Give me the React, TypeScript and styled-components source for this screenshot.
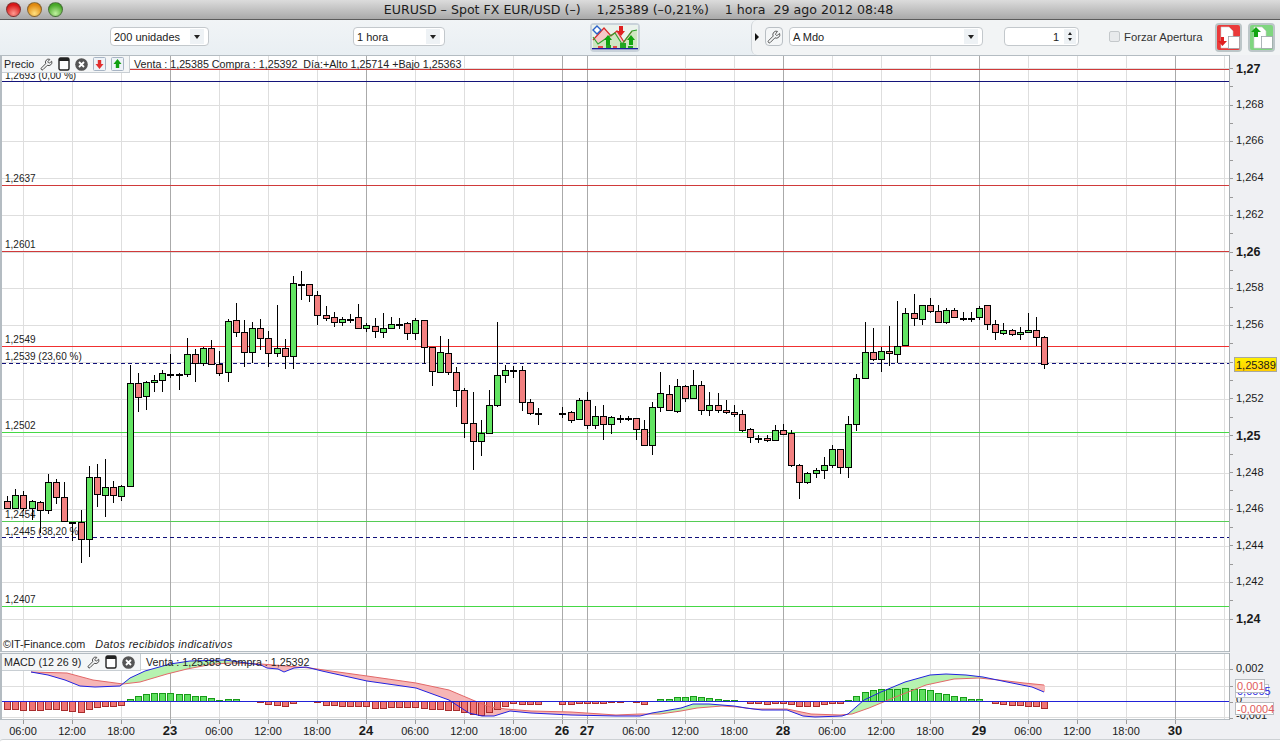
import styled, { createGlobalStyle } from 'styled-components';
import { Wrench } from 'lucide-react';

const GlobalStyle = createGlobalStyle`
  html, body {
    margin: 0;
    padding: 0;
    background: #fff;
    font-family: "Liberation Sans", Arial, sans-serif;
  }
`;

type Kind = 'g' | 'r' | 'd';
// x, body top, body bottom, wick top, wick bottom, kind (page pixels)
type Candle = [number, number, number, number, number, Kind];

const CANDLES: Candle[] = [
  [7, 501, 508, 496, 508, 'r'], [15, 495, 508, 489, 508, 'g'], [23, 495, 508, 491, 511, 'r'],
  [32, 501, 508, 500, 520, 'g'], [40, 502, 510, 501, 533, 'r'], [48, 482, 510, 474, 514, 'g'],
  [56, 482, 497, 479, 504, 'r'], [64, 497, 521, 482, 521, 'r'], [72, 522, 522, 522, 541, 'd'],
  [81, 522, 539, 510, 563, 'r'], [89, 477, 539, 466, 557, 'g'], [97, 477, 494, 464, 507, 'r'],
  [105, 487, 495, 459, 517, 'g'], [113, 487, 495, 481, 503, 'r'], [121, 486, 496, 485, 501, 'g'],
  [130, 383, 486, 365, 486, 'g'], [138, 383, 397, 373, 412, 'r'], [146, 382, 396, 381, 410, 'g'],
  [154, 380, 382, 375, 392, 'g'], [162, 373, 380, 370, 392, 'g'], [170, 374, 374, 354, 378, 'd'],
  [179, 374, 374, 373, 390, 'd'], [187, 354, 374, 338, 377, 'g'], [195, 354, 363, 349, 382, 'r'],
  [203, 348, 363, 347, 366, 'g'], [211, 348, 364, 340, 365, 'r'], [219, 364, 373, 351, 376, 'r'],
  [228, 321, 372, 319, 382, 'g'], [236, 320, 332, 303, 337, 'r'], [244, 332, 352, 320, 367, 'r'],
  [252, 328, 352, 322, 363, 'g'], [260, 328, 338, 319, 350, 'r'], [268, 338, 353, 331, 367, 'r'],
  [277, 348, 353, 305, 357, 'g'], [285, 348, 356, 339, 369, 'r'], [293, 283, 356, 276, 369, 'g'],
  [301, 284, 284, 271, 300, 'd'], [309, 284, 295, 284, 302, 'r'], [317, 295, 315, 291, 325, 'r'],
  [326, 315, 318, 306, 321, 'r'], [334, 317, 322, 312, 327, 'r'], [342, 319, 322, 317, 326, 'g'],
  [350, 319, 319, 314, 323, 'd'], [358, 317, 328, 304, 329, 'r'], [366, 325, 328, 323, 332, 'g'],
  [375, 326, 331, 318, 338, 'r'], [383, 328, 332, 313, 338, 'g'], [391, 324, 328, 317, 328, 'g'],
  [399, 324, 324, 318, 329, 'd'], [407, 323, 333, 322, 340, 'r'], [415, 320, 333, 318, 340, 'g'],
  [424, 320, 347, 320, 364, 'r'], [432, 347, 371, 347, 386, 'r'], [440, 352, 372, 336, 372, 'g'],
  [448, 353, 372, 339, 375, 'r'], [456, 372, 390, 367, 407, 'r'], [464, 390, 423, 388, 438, 'r'],
  [473, 423, 441, 392, 470, 'r'], [481, 433, 441, 420, 456, 'g'], [489, 405, 433, 390, 434, 'g'],
  [497, 375, 405, 322, 407, 'g'], [505, 370, 375, 365, 383, 'g'], [513, 370, 370, 366, 378, 'd'],
  [522, 370, 402, 366, 411, 'r'], [530, 402, 413, 399, 415, 'r'], [538, 413, 413, 408, 425, 'd'],
  [562, 413, 413, 407, 418, 'd'], [571, 412, 420, 411, 423, 'r'], [579, 400, 419, 398, 419, 'g'],
  [587, 400, 425, 392, 429, 'r'], [595, 416, 425, 406, 429, 'g'], [603, 416, 424, 405, 440, 'r'],
  [611, 417, 424, 416, 434, 'g'], [620, 418, 418, 415, 423, 'd'], [628, 418, 418, 416, 421, 'd'],
  [636, 418, 429, 418, 440, 'r'], [644, 429, 445, 420, 446, 'r'], [652, 407, 445, 402, 455, 'g'],
  [660, 393, 407, 372, 412, 'g'], [669, 394, 410, 385, 411, 'r'], [677, 386, 411, 379, 413, 'g'],
  [685, 386, 398, 385, 402, 'r'], [693, 385, 398, 370, 398, 'g'], [701, 385, 410, 381, 415, 'r'],
  [709, 405, 410, 392, 416, 'g'], [718, 405, 410, 393, 413, 'r'], [726, 410, 412, 400, 414, 'r'],
  [734, 412, 414, 405, 417, 'r'], [742, 414, 430, 410, 432, 'r'], [750, 429, 437, 428, 443, 'r'],
  [758, 438, 438, 435, 443, 'd'], [767, 438, 440, 435, 442, 'r'], [775, 430, 440, 425, 440, 'g'],
  [783, 430, 434, 424, 434, 'r'], [791, 433, 465, 430, 467, 'r'], [799, 465, 482, 464, 499, 'r'],
  [807, 473, 482, 472, 484, 'g'], [816, 470, 473, 468, 478, 'g'], [824, 465, 470, 457, 479, 'g'],
  [832, 449, 465, 445, 468, 'g'], [840, 449, 467, 449, 474, 'r'], [848, 424, 467, 416, 478, 'g'],
  [856, 378, 424, 374, 431, 'g'], [865, 352, 378, 322, 378, 'g'], [873, 352, 359, 328, 361, 'r'],
  [881, 351, 359, 347, 372, 'g'], [889, 351, 353, 326, 366, 'r'], [897, 346, 354, 301, 363, 'g'],
  [905, 313, 345, 308, 345, 'g'], [914, 313, 318, 294, 326, 'r'], [922, 305, 319, 305, 325, 'g'],
  [930, 305, 311, 298, 313, 'r'], [938, 311, 322, 305, 322, 'r'], [946, 310, 322, 308, 324, 'g'],
  [954, 310, 317, 308, 318, 'r'], [963, 318, 318, 312, 321, 'd'], [971, 318, 318, 312, 322, 'd'],
  [979, 308, 317, 306, 320, 'g'], [987, 305, 324, 305, 330, 'r'], [995, 324, 332, 320, 340, 'r'],
  [1003, 330, 333, 323, 335, 'g'], [1012, 330, 334, 329, 336, 'r'], [1020, 332, 334, 327, 340, 'g'],
  [1028, 330, 332, 313, 332, 'g'], [1036, 330, 337, 317, 346, 'r'], [1044, 337, 364, 336, 369, 'r'],
];

// x, height above (+) or below (-) the zero line
const HISTOGRAM: [number, number][] = [
  [7, -8], [15, -8], [23, -9], [32, -9], [40, -9], [48, -8], [56, -8], [64, -9], [72, -10], [81, -11],
  [89, -8], [97, -6], [105, -5], [113, -5], [121, -4], [130, 2], [138, 5], [146, 7], [154, 8], [162, 8],
  [170, 8], [179, 7], [187, 7], [195, 5], [203, 5], [211, 3], [219, 1], [228, 2], [236, 2],
  [260, -1], [268, -3], [277, -4], [285, -5], [293, -2], [317, -1], [326, -4], [334, -4], [342, -5],
  [350, -5], [358, -5], [366, -5], [375, -7], [383, -7], [391, -6], [399, -6], [407, -6], [415, -6],
  [424, -7], [432, -8], [440, -8], [448, -9], [456, -9], [464, -11], [473, -13], [481, -14], [489, -11],
  [497, -8], [505, -5], [513, -2], [522, -3], [530, -3], [538, -3], [562, -3], [571, -3], [579, -2],
  [587, -2], [595, -2], [603, -2], [611, -1], [620, -1], [636, -1], [644, -3], [660, 2], [669, 2],
  [677, 4], [685, 4], [693, 5], [701, 4], [709, 3], [718, 2], [726, 1], [734, 1], [750, -2], [758, -2],
  [767, -3], [775, -2], [783, -2], [791, -3], [799, -5], [807, -5], [816, -5], [824, -3], [832, -2],
  [840, -2], [848, 1], [856, 5], [865, 9], [873, 11], [881, 12], [889, 12], [897, 12], [905, 13],
  [914, 12], [922, 12], [930, 11], [938, 8], [946, 7], [954, 5], [963, 4], [971, 2], [979, 2],
  [995, -2], [1003, -3], [1012, -4], [1020, -4], [1028, -5], [1036, -5], [1044, -7],
];

type Pt = [number, number];

const MACD_LINE: Pt[] = [
  [31, 672], [48, 675], [65, 680], [80, 686], [95, 687], [120, 686], [130, 678], [145, 671], [170, 664],
  [190, 661], [225, 660], [261, 665], [267, 668], [278, 669], [284, 672], [294, 668], [306, 667],
  [322, 671], [367, 681], [416, 688], [449, 700], [469, 713], [482, 716], [494, 716], [510, 711],
  [531, 713], [571, 715], [616, 716], [640, 716], [652, 713], [664, 711], [681, 708], [693, 704],
  [709, 704], [734, 706], [746, 708], [762, 710], [787, 710], [803, 716], [815, 717], [842, 716],
  [848, 714], [864, 700], [881, 692], [905, 682], [930, 675], [946, 674], [966, 675], [983, 677],
  [1007, 682], [1032, 687], [1044, 692],
];

const SIGNAL_LINE: Pt[] = [
  [31, 672], [67, 673], [93, 680], [123, 684], [140, 682], [167, 674], [187, 669], [213, 664], [233, 663],
  [261, 664], [286, 666], [310, 668], [331, 671], [367, 676], [416, 683], [449, 690], [475, 701],
  [490, 707], [506, 709], [531, 711], [571, 712], [616, 715], [640, 714], [660, 714], [681, 711],
  [697, 708], [722, 706], [738, 707], [754, 709], [787, 709], [811, 714], [840, 715], [852, 714],
  [869, 708], [893, 698], [926, 685], [954, 679], [979, 678], [999, 680], [1024, 683], [1044, 685],
];

const DAY_LINES = [170, 366, 562, 587, 783, 979, 1175];
const HOUR_LINES = [23, 72, 121, 219, 268, 317, 415, 464, 513, 636, 685, 734, 832, 881, 930, 1028, 1077, 1126, 1224];

const TIME_LABELS: [number, string][] = [
  [23, '06:00'], [72, '12:00'], [121, '18:00'], [170, '23'], [219, '06:00'], [268, '12:00'], [317, '18:00'],
  [366, '24'], [415, '06:00'], [464, '12:00'], [513, '18:00'], [562, '26'], [587, '27'], [636, '06:00'],
  [685, '12:00'], [734, '18:00'], [783, '28'], [832, '06:00'], [881, '12:00'], [930, '18:00'], [979, '29'],
  [1028, '06:00'], [1077, '12:00'], [1126, '18:00'], [1175, '30'],
];

const PRICE_LABELS: [number, string, boolean][] = [
  [68, '1,27', true], [104.7, '1,268', false], [141.4, '1,266', false], [178, '1,264', false],
  [215, '1,262', false], [251.5, '1,26', true], [288, '1,258', false], [325, '1,256', false],
  [398.6, '1,252', false], [435.5, '1,25', true], [472.5, '1,248', false], [508.8, '1,246', false],
  [545.5, '1,244', false], [582, '1,242', false], [618.8, '1,24', true],
];

const LEVELS: { y: number; color: string; dashed?: boolean }[] = [
  { y: 69, color: '#d03a3a' },
  { y: 81, color: '#14147a' },
  { y: 185, color: '#d03a3a' },
  { y: 251, color: '#d03a3a' },
  { y: 346, color: '#f03030' },
  { y: 363, color: '#10107a', dashed: true },
  { y: 432, color: '#45d845' },
  { y: 521, color: '#55cc55' },
  { y: 537, color: '#10107a', dashed: true },
  { y: 606, color: '#45d845' },
];

const LEVEL_LABELS: [number, string][] = [
  [75, '1,2693 (0,00 %)'], [178, '1,2637'], [244, '1,2601'], [339, '1,2549'], [356, '1,2539 (23,60 %)'],
  [425, '1,2502'], [514, '1,2454'], [531, '1,2445 (38,20 %)'], [599, '1,2407'],
];

const Page = styled.div`
  width: 1280px;
  height: 744px;
  display: flex;
  flex-direction: column;
  overflow: hidden;
  background: #eff1f3;
`;

const TitleBar = styled.div`
  height: 19px;
  flex: none;
  position: relative;
  display: flex;
  align-items: center;
  justify-content: center;
  background: linear-gradient(#dcdcdc, #a9a9a9);
  border-bottom: 1px solid #5b5b5b;
`;

const TrafficLights = styled.div`
  position: absolute;
  left: 6px;
  top: 2px;
  display: flex;
  gap: 6px;
`;

const Light = styled.span<{ $color: string; $glow: string }>`
  width: 15px;
  height: 15px;
  border-radius: 50%;
  box-sizing: border-box;
  border: 1px solid rgba(60, 60, 60, 0.55);
  background: radial-gradient(circle at 50% 80%, ${(p) => p.$glow}, ${(p) => p.$color} 70%);
`;

const TitleText = styled.div`
  margin-left: -3px;
  font-family: "DejaVu Sans", sans-serif;
  font-size: 12.6px;
  color: #1c1c1c;
  white-space: pre;
`;

const Toolbar = styled.div`
  height: 35px;
  flex: none;
  display: flex;
  align-items: center;
  padding-left: 110px;
  background: linear-gradient(#f1f4f6, #e9eff3);
  box-sizing: border-box;
`;

const SelectBox = styled.div<{ $w: number; $ml?: number }>`
  width: ${(p) => p.$w}px;
  height: 19px;
  margin-left: ${(p) => p.$ml ?? 0}px;
  margin-bottom: 2px;
  box-sizing: border-box;
  flex: none;
  display: flex;
  align-items: center;
  justify-content: space-between;
  padding: 0 4px 0 3px;
  background: #fff;
  border: 1px solid #c3c8cc;
  border-radius: 4px;
  font-size: 11px;
  color: #222;
`;

const Caret = styled.span`
  width: 14px;
  height: 15px;
  background: #eef2f5;
  display: flex;
  align-items: center;
  justify-content: center;
  &::after {
    content: '';
    border-left: 3px solid transparent;
    border-right: 3px solid transparent;
    border-top: 4px solid #222;
  }
`;

const IndicatorButton = styled.div`
  margin-left: 145px;
  flex: none;
  width: 50px;
  height: 29px;
  box-sizing: border-box;
  border: 2px solid #c9d2da;
  border-radius: 4px;
  background: #fff;
  display: flex;
`;

const RightGroup = styled.div`
  margin-left: 111px;
  flex: 1;
  height: 100%;
  display: flex;
  align-items: center;
  background: #f2f4f5;
  border-left: 1px solid #cfd4d8;
  border-top-left-radius: 6px;
  border-bottom-left-radius: 6px;
  padding-left: 3px;
`;

const Triangle = styled.span`
  flex: none;
  margin-bottom: 2px;
  border-top: 4px solid transparent;
  border-bottom: 4px solid transparent;
  border-left: 4px solid #111;
`;

const WrenchButton = styled.div`
  flex: none;
  margin-left: 6px;
  margin-bottom: 2px;
  width: 18px;
  height: 19px;
  box-sizing: border-box;
  border: 1px solid #b9bfc4;
  border-radius: 4px;
  background: #f4f6f7;
  display: flex;
  align-items: center;
  justify-content: center;
  color: #333;
`;

const Spinner = styled(SelectBox)`
  justify-content: flex-end;
  gap: 5px;
  padding-right: 2px;
`;

const SpinArrows = styled.span`
  width: 12px;
  height: 15px;
  background: #eef2f5;
  display: flex;
  flex-direction: column;
  align-items: center;
  justify-content: center;
  gap: 3px;
  &::before {
    content: '';
    border-left: 2px solid transparent;
    border-right: 2px solid transparent;
    border-bottom: 3px solid #222;
  }
  &::after {
    content: '';
    border-left: 2px solid transparent;
    border-right: 2px solid transparent;
    border-top: 3px solid #222;
  }
`;

const CheckBox = styled.span`
  flex: none;
  margin-left: 30px;
  margin-bottom: 2px;
  width: 11px;
  height: 11px;
  box-sizing: border-box;
  border: 1px solid #c4c8cb;
  border-radius: 2px;
  background: #e8eaec;
`;

const CheckLabel = styled.span`
  margin-left: 4px;
  margin-bottom: 2px;
  flex: none;
  width: 80px;
  font-size: 11.3px;
  color: #333;
  white-space: nowrap;
`;

const OrderButton = styled.div<{ $ml: number }>`
  flex: none;
  margin-left: ${(p) => p.$ml}px;
  width: 27px;
  height: 29px;
  display: flex;
`;

const ChartRow = styled.div<{ $h: number; $mt?: number }>`
  height: ${(p) => p.$h}px;
  margin-top: ${(p) => p.$mt ?? 0}px;
  flex: none;
  display: flex;
`;

const Plot = styled.div`
  width: 1229px;
  flex: none;
  position: relative;
  box-sizing: border-box;
  background: #fff;
  border: 1px solid #b4bcc2;
  border-right: none;
  border-left-width: 2px;
`;

const Axis = styled.div`
  flex: 1;
  border-left: 1px solid #a9aeb2;
  background: #eff0f3;
`;

const Chart = styled.svg`
  display: block;
  width: 100%;
  height: 100%;
`;

const LegendBox = styled.div<{ $w: number }>`
  position: absolute;
  left: 0;
  top: 0;
  width: ${(p) => p.$w}px;
  height: 17px;
  box-sizing: border-box;
  display: flex;
  align-items: center;
  gap: 5px;
  padding: 0 2px;
  background: #f4f6f7;
  border-right: 1px solid #c8ced3;
  border-bottom: 1px solid #c8ced3;
  font-size: 10.7px;
  color: #222;
  white-space: nowrap;
`;

const LegendName = styled.span`
  margin-right: 1px;
`;

const LegendQuote = styled.div<{ $left: number }>`
  position: absolute;
  left: ${(p) => p.$left}px;
  top: 2px;
  font-size: 10.7px;
  color: #222;
  white-space: pre;
`;

const Credit = styled.div`
  position: absolute;
  left: 1px;
  bottom: 1px;
  font-size: 10.8px;
  color: #222;
  display: flex;
  gap: 10px;
  white-space: nowrap;
`;

const CreditNote = styled.span`
  font-style: italic;
  letter-spacing: 0.35px;
`;

const TimeAxis = styled.div`
  height: 19px;
  flex: none;
  background: #eff0f3;
`;

const BottomEdge = styled.div`
  flex: 1;
  background: #fff;
  border-top: 1px solid #cdd1d4;
  border-top-left-radius: 3px;
`;

const LevelLabel = styled.text`
  font-size: 10px;
  fill: #222;
`;

const PriceLabel = styled.text<{ $bold?: boolean }>`
  font-size: ${(p) => (p.$bold ? 12.5 : 11)}px;
  font-weight: ${(p) => (p.$bold ? 700 : 400)};
  fill: #1a1a1a;
`;

const TimeLabel = styled.text<{ $bold?: boolean }>`
  font-size: ${(p) => (p.$bold ? 13 : 11)}px;
  font-weight: ${(p) => (p.$bold ? 700 : 400)};
  fill: #1a1a1a;
  text-anchor: middle;
`;

const BoxedValue = styled.text<{ $color: string }>`
  font-size: 11px;
  fill: ${(p) => p.$color};
`;

function valueAt(points: Pt[], x: number) {
  for (let i = 1; i < points.length; i++) {
    const [x0, y0] = points[i - 1];
    const [x1, y1] = points[i];
    if (x <= x1) return y0 + ((y1 - y0) * (x - x0)) / (x1 - x0);
  }
  return points[points.length - 1][1];
}

function toPolyline(points: Pt[]) {
  return points.map((p) => p.join(',')).join(' ');
}

function Grid({ from, to, rows }: { from: number; to: number; rows: number[] }) {
  return (
    <g shapeRendering="crispEdges">
      {rows.map((y) => (
        <line key={y} x1={2} x2={1229} y1={Math.round(y) + 0.5} y2={Math.round(y) + 0.5} stroke="#dedede" />
      ))}
      {HOUR_LINES.map((x) => (
        <line key={x} x1={x + 0.5} x2={x + 0.5} y1={from} y2={to} stroke="#dedede" />
      ))}
      {DAY_LINES.map((x) => (
        <line key={x} x1={x + 0.5} x2={x + 0.5} y1={from} y2={to} stroke="#aaaaaa" />
      ))}
    </g>
  );
}

function Candles() {
  return (
    <g shapeRendering="crispEdges">
      {CANDLES.map(([x, top, bottom, hi, lo, kind]) => (
        <g key={x}>
          <line x1={x + 0.5} x2={x + 0.5} y1={hi} y2={lo} stroke="#000" />
          {kind === 'd' ? (
            <rect x={x - 3} y={top} width={7} height={2} fill="#000" />
          ) : (
            <rect
              x={x - 2.5}
              y={top + 0.5}
              width={6}
              height={bottom - top}
              fill={kind === 'g' ? '#62e462' : '#f28080'}
              stroke="#000"
            />
          )}
        </g>
      ))}
    </g>
  );
}

function MacdBands() {
  const quads = [];
  for (let x = 31; x < 1044; x += 2) {
    const b0 = valueAt(MACD_LINE, x);
    const b1 = valueAt(MACD_LINE, x + 2);
    const s0 = valueAt(SIGNAL_LINE, x);
    const s1 = valueAt(SIGNAL_LINE, x + 2);
    quads.push(
      <polygon
        key={x}
        points={`${x},${b0} ${x + 2},${b1} ${x + 2},${s1} ${x},${s0}`}
        fill={b0 + b1 < s0 + s1 ? '#b6f2b0' : '#f6b6b6'}
      />,
    );
  }
  return <g>{quads}</g>;
}

function WindowIcon() {
  return (
    <svg width="12" height="14" viewBox="0 0 12 14">
      <rect x="1" y="1" width="10" height="12" rx="1.5" fill="#fff" stroke="#222" strokeWidth="1.4" />
      <rect x="1" y="1" width="10" height="3" fill="#222" />
    </svg>
  );
}

function CloseIcon() {
  return (
    <svg width="13" height="13" viewBox="0 0 13 13">
      <circle cx="6.5" cy="6.5" r="6.3" fill="#555" />
      <path d="M4 4l5 5M9 4l-5 5" stroke="#fff" strokeWidth="1.8" />
    </svg>
  );
}

function ArrowDoc({ up }: { up?: boolean }) {
  return (
    <svg width="13" height="14" viewBox="0 0 13 14">
      <rect x="0.5" y="0.5" width="12" height="13" rx="1" fill="#eef3f8" stroke="#a7b4c4" />
      {up ? (
        <path d="M6.5 2L10.5 7H8.2V11H4.8V7H2.5z" fill="#12a012" />
      ) : (
        <path d="M6.5 12L2.5 7H4.8V3H8.2V7H10.5z" fill="#e23030" />
      )}
    </svg>
  );
}

function IndicatorIcon() {
  return (
    <svg width="46" height="25" viewBox="0 0 46 25">
      <rect width="46" height="25" fill="#eaf2ec" />
      <path d="M1 15L12 3l7 8 6-5 7 11 8-11 5-1v18H1z" fill="#f6c8c8" />
      <path d="M1 12l5 7 10-7 7-4 7 11 10-13 5-1v19H1z" fill="#c5eec0" opacity="0.8" />
      <polyline points="1,15 12,3 19,11 25,6 32,17 40,6" fill="none" stroke="#d82a2a" strokeWidth="1.2" />
      <polyline points="1,12 6,19 16,12 23,8 30,19 40,6 45,5" fill="none" stroke="#2fa52f" strokeWidth="1.2" />
      <path d="M5 1l4 4-4 4-4-4z" fill="#fff" stroke="#2b62c8" strokeWidth="1.4" />
      <path d="M27 1h4v5h2l-4 5-4-5h2z" fill="#e02020" />
      <path d="M16 10l4 5h-2v5h-4v-5h-2z" fill="#10a510" />
      <path d="M39 10l4 5h-2v5h-4v-5h-2z" fill="#10a510" />
      <g fill="#23a523">
        <rect x="6" y="21" width="5" height="2" fill="#e24a4a" />
        <rect x="14" y="20" width="5" height="3" />
        <rect x="21" y="21" width="4" height="2" fill="#e24a4a" />
        <rect x="28" y="18" width="6" height="5" />
        <rect x="36" y="21" width="5" height="2" />
      </g>
      <rect y="23" width="46" height="1.4" fill="#1c1c9c" />
    </svg>
  );
}

function OrderIcon({ up }: { up?: boolean }) {
  const tone = up ? '#7fd67f' : '#ea3a3a';
  return (
    <svg width="27" height="29" viewBox="0 0 27 29">
      <rect x="1" y="1" width="25" height="27" rx="3" fill={tone} stroke="#bcc6c8" strokeWidth="2" />
      <path d="M6 4h8l4 4v17H6z" fill="#fff" stroke="#ccc" strokeWidth="0.6" />
      <rect x="13.5" y="13.5" width="11" height="12" fill="#fff" stroke="#9aa3a8" strokeWidth="0.8" />
      {up ? (
        <path d="M8 4l5 5h-3v5H6V9H3z" fill="#10a510" />
      ) : (
        <path d="M7.5 23l-4.5-5h3v-4h3v4h3z" fill="#e02020" />
      )}
    </svg>
  );
}

function PricePanel() {
  const rows = [68, 104.7, 141.4, 178, 215, 251.5, 288, 325, 362, 398.6, 436, 473, 509, 546, 582, 619];
  return (
    <ChartRow $h={597}>
      <Plot>
        <Chart viewBox="2 56 1227 595" preserveAspectRatio="none">
          <Grid from={56} to={651} rows={rows} />
          <g shapeRendering="crispEdges">
            {LEVELS.map((l) => (
              <line
                key={l.y}
                x1={2}
                x2={1229}
                y1={l.y + 0.5}
                y2={l.y + 0.5}
                stroke={l.color}
                strokeDasharray={l.dashed ? '4 3' : undefined}
              />
            ))}
          </g>
          {LEVEL_LABELS.map(([y, text]) => (
            <LevelLabel key={y} x={5} y={y + 3.5}>
              {text}
            </LevelLabel>
          ))}
          <Candles />
        </Chart>
        <LegendBox $w={128}>
          <LegendName>Precio</LegendName>
          <Wrench size={13} strokeWidth={1.5} />
          <WindowIcon />
          <CloseIcon />
          <ArrowDoc />
          <ArrowDoc up />
        </LegendBox>
        <LegendQuote $left={132}>Venta : 1,25385 Compra : 1,25392  Día:+Alto 1,25714 +Bajo 1,25363</LegendQuote>
        <Credit>
          <span>©IT-Finance.com</span>
          <CreditNote>Datos recibidos indicativos</CreditNote>
        </Credit>
      </Plot>
      <Axis>
        <Chart viewBox="1230 55 50 597">
          <g shapeRendering="crispEdges">
            {Array.from({ length: 31 }, (_, i) => 68 + i * 18.36).map((y) => (
              <line key={y} x1={1229} x2={1233} y1={Math.round(y) + 0.5} y2={Math.round(y) + 0.5} stroke="#9a9a9a" />
            ))}
          </g>
          {PRICE_LABELS.map(([y, text, bold]) => (
            <PriceLabel key={text} x={1236} y={y + (bold ? 4.5 : 3)} $bold={bold}>
              {text}
            </PriceLabel>
          ))}
          <defs>
            <linearGradient id="priceTag" x1="0" y1="0" x2="0" y2="1">
              <stop offset="0" stopColor="#fff200" />
              <stop offset="1" stopColor="#ffcb00" />
            </linearGradient>
          </defs>
          <rect x={1234.5} y={357.5} width={42} height={14} fill="url(#priceTag)" stroke="#a8a8a0" />
          <PriceLabel x={1236} y={368.5}>
            1,25389
          </PriceLabel>
        </Chart>
      </Axis>
    </ChartRow>
  );
}

function MacdPanel() {
  return (
    <ChartRow $h={67} $mt={1}>
      <Plot>
        <Chart viewBox="2 654 1227 65" preserveAspectRatio="none">
          <Grid from={654} to={719} rows={[669, 686, 717]} />
          <MacdBands />
          <g shapeRendering="crispEdges">
            {HISTOGRAM.map(([x, h]) => (
              <rect
                key={x}
                x={x - 2.5}
                y={h > 0 ? 701.5 - h : 701.5}
                width={6}
                height={Math.abs(h)}
                fill={h > 0 ? '#5fe05f' : '#ef7474'}
                stroke={h > 0 ? '#189a18' : '#a82c2c'}
              />
            ))}
          </g>
          <polyline points={toPolyline(SIGNAL_LINE)} fill="none" stroke="#e26868" />
          <polyline points={toPolyline(MACD_LINE)} fill="none" stroke="#2222e0" />
          <line x1={2} x2={1229} y1={701.5} y2={701.5} stroke="#2222d8" shapeRendering="crispEdges" />
        </Chart>
        <LegendBox $w={139}>
          <LegendName>MACD (12 26 9)</LegendName>
          <Wrench size={13} strokeWidth={1.5} />
          <WindowIcon />
          <CloseIcon />
        </LegendBox>
        <LegendQuote $left={144}>Venta : 1,25385 Compra : 1,25392</LegendQuote>
      </Plot>
      <Axis>
        <Chart viewBox="1230 653 50 67">
          <g shapeRendering="crispEdges">
            {[669, 686, 702, 718].map((y) => (
              <line key={y} x1={1229} x2={1233} y1={y + 0.5} y2={y + 0.5} stroke="#9a9a9a" />
            ))}
          </g>
          <BoxedValue $color="#1a1a1a" x={1236} y={672}>
            0,002
          </BoxedValue>
          <BoxedValue $color="#1a1a1a" x={1236} y={719}>
            -0,001
          </BoxedValue>
          <BoxedValue $color="#1a1a1a" x={1236} y={703}>
            0
          </BoxedValue>
          <rect x={1235.5} y={684.5} width={33} height={13} fill="#fff" stroke="#c0c4c8" />
          <BoxedValue $color="#2a2ae0" x={1237} y={695}>
            0,0005
          </BoxedValue>
          <rect x={1235.5} y={679.5} width={29} height={13} fill="#fff" stroke="#b8bcc0" />
          <BoxedValue $color="#e05a5a" x={1237} y={690}>
            0,001
          </BoxedValue>
          <rect x={1235.5} y={702.5} width={38} height={12} fill="#fff" stroke="#b8bcc0" />
          <BoxedValue $color="#e05a5a" x={1237} y={712.5}>
            -0,0004
          </BoxedValue>
        </Chart>
      </Axis>
    </ChartRow>
  );
}

export default function App() {
  return (
    <Page>
      <GlobalStyle />
      <TitleBar>
        <TrafficLights>
          <Light $color="#d81818" $glow="#ff9a90" />
          <Light $color="#e08a10" $glow="#ffe080" />
          <Light $color="#48a828" $glow="#c0f0a0" />
        </TrafficLights>
        <TitleText>EURUSD – Spot FX EUR/USD (–)    1,25389 (–0,21%)    1 hora  29 ago 2012 08:48</TitleText>
      </TitleBar>
      <Toolbar>
        <SelectBox $w={99}>
          200 unidades
          <Caret />
        </SelectBox>
        <SelectBox $w={92} $ml={144}>
          1 hora
          <Caret />
        </SelectBox>
        <IndicatorButton>
          <IndicatorIcon />
        </IndicatorButton>
        <RightGroup>
          <Triangle />
          <WrenchButton>
            <Wrench size={14} strokeWidth={1.4} />
          </WrenchButton>
          <SelectBox $w={194} $ml={6}>
            A Mdo
            <Caret />
          </SelectBox>
          <Spinner $w={75} $ml={21}>
            1
            <SpinArrows />
          </Spinner>
          <CheckBox />
          <CheckLabel>Forzar Apertura</CheckLabel>
          <OrderButton $ml={11}>
            <OrderIcon />
          </OrderButton>
          <OrderButton $ml={6}>
            <OrderIcon up />
          </OrderButton>
        </RightGroup>
      </Toolbar>
      <PricePanel />
      <MacdPanel />
      <TimeAxis>
        <Chart viewBox="0 720 1280 19">
          <g shapeRendering="crispEdges">
            {TIME_LABELS.map(([x]) => (
              <line key={x} x1={x + 0.5} x2={x + 0.5} y1={720} y2={724} stroke="#9a9a9a" />
            ))}
          </g>
          {TIME_LABELS.map(([x, text]) => (
            <TimeLabel key={x} x={x} y={735} $bold={text.length === 2}>
              {text}
            </TimeLabel>
          ))}
        </Chart>
      </TimeAxis>
      <BottomEdge />
    </Page>
  );
}
